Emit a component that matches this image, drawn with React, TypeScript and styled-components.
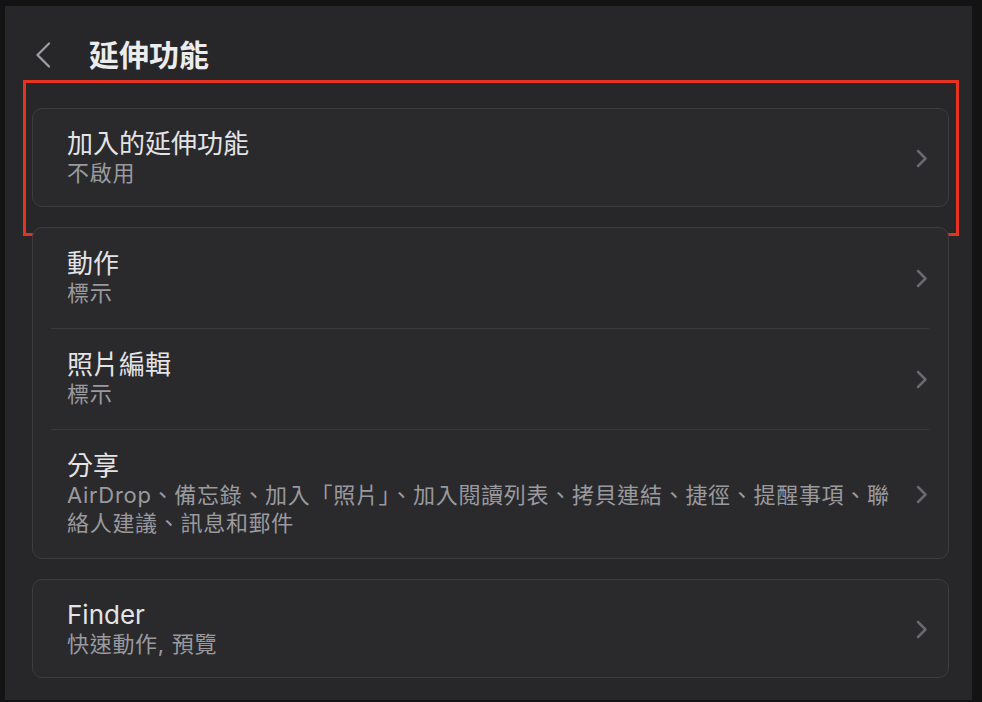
import React from 'react';
import styled, { createGlobalStyle } from 'styled-components';

const GlobalStyle = createGlobalStyle`
  html, body {
    margin: 0;
    padding: 0;
    background: #131313;
  }
  * {
    box-sizing: border-box;
  }
`;

const FONT = '"Inter", "Noto Sans CJK TC", "Noto Sans CJK SC", sans-serif';

const Frame = styled.div`
  width: 982px;
  height: 702px;
  padding: 6px 10px 2px 5px;
  background: #131313;
  font-family: ${FONT};
`;

const Panel = styled.div`
  height: 100%;
  background: #27272a;
  padding: 24px 23px 0 27px;
  display: flex;
  flex-direction: column;
  overflow: hidden;
`;

const Header = styled.div`
  flex-shrink: 0;
  height: 50px;
  display: flex;
  align-items: center;
  padding-left: 3px;
  gap: 38px;
`;

const HeaderTitle = styled.h1`
  margin: 0;
  font-size: 30px;
  font-weight: 700;
  color: #ececec;
  line-height: 1;
`;

const List = styled.div`
  flex-shrink: 0;
  margin-top: 28px;
  display: flex;
  flex-direction: column;
  gap: 20px;
`;

const Card = styled.div`
  position: relative;
  background: #2a2a2d;
  border: 1px solid #3d3d40;
  border-radius: 10px;
`;

const Highlight = styled.div`
  position: absolute;
  top: -29px;
  left: -10px;
  right: -11px;
  bottom: -30px;
  border: 3px solid #e6321e;
  pointer-events: none;
`;

const Row = styled.div<{ $top: number; $bottom: number }>`
  display: flex;
  align-items: center;
  padding: ${(p) => p.$top}px 20px ${(p) => p.$bottom}px 34px;
`;

const Texts = styled.div`
  flex: 1;
  padding-right: 10px;
`;

const Title = styled.div`
  font-size: 26px;
  line-height: 30px;
  color: #e4e4e6;
`;

const Subtitle = styled.div`
  font-size: 22px;
  line-height: 28px;
  color: #9a9a9e;
  letter-spacing: 0.7px;
`;

const Separator = styled.div`
  height: 1px;
  margin: 0 19px 0 18px;
  background: #3a3a3d;
`;

const BackIcon = () => (
  <svg width="16" height="26" viewBox="0 0 16 26" fill="none">
    <polyline
      points="14,1.5 2.5,13 14,24.5"
      stroke="#a0a0a4"
      strokeWidth="2.2"
      strokeLinecap="round"
      strokeLinejoin="round"
    />
  </svg>
);

const Chevron = () => (
  <svg width="12" height="19" viewBox="0 0 12 19" fill="none">
    <polyline
      points="2,2 9.5,9.5 2,17"
      stroke="#6a6a6e"
      strokeWidth="2.5"
      strokeLinecap="round"
      strokeLinejoin="round"
    />
  </svg>
);

type Item = { title: string; subtitle: string };

function SettingRow({
  title,
  subtitle,
  top = 20,
  bottom = 19,
}: Item & { top?: number; bottom?: number }) {
  return (
    <Row $top={top} $bottom={bottom}>
      <Texts>
        <Title>{title}</Title>
        <Subtitle>{subtitle}</Subtitle>
      </Texts>
      <Chevron />
    </Row>
  );
}

const group: Item[] = [
  { title: '動作', subtitle: '標示' },
  { title: '照片編輯', subtitle: '標示' },
  {
    title: '分享',
    subtitle:
      'AirDrop、備忘錄、加入「照片」、加入閱讀列表、拷貝連結、捷徑、提醒事項、聯絡人建議、訊息和郵件',
  },
];

export default function App() {
  return (
    <Frame>
      <GlobalStyle />
      <Panel>
        <Header>
          <BackIcon />
          <HeaderTitle>延伸功能</HeaderTitle>
        </Header>
        <List>
          <Card>
            <SettingRow title="加入的延伸功能" subtitle="不啟用" />
            <Highlight />
          </Card>
          <Card>
            {group.map((item, i) => (
              <React.Fragment key={item.title}>
                {i > 0 && <Separator />}
                <SettingRow {...item} top={21} bottom={21} />
              </React.Fragment>
            ))}
          </Card>
          <Card>
            <SettingRow title="Finder" subtitle="快速動作, 預覽" />
          </Card>
        </List>
      </Panel>
    </Frame>
  );
}
